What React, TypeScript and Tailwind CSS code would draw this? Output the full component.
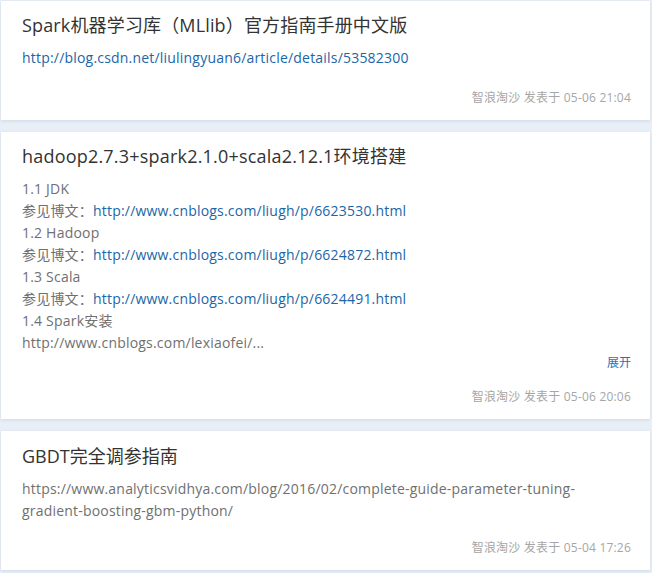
import React from 'react';

const font = { fontFamily: '"Open Sans", "Noto Sans CJK SC", sans-serif' };

const Meta: React.FC<{ date: string; className?: string }> = ({ date, className }) => (
  <div className={`text-right text-[12px] leading-[18px] tracking-[0.2px] text-[#a6a6a6] ${className ?? ''}`}>
    智浪淘沙 发表于 {date}
  </div>
);

const Ref: React.FC<{ url: string }> = ({ url }) => (
  <div>
    参见博文：<a className="text-[#1a66a8]">{url}</a>
  </div>
);

export default function App() {
  return (
    <div className="min-h-[573px] bg-[#e9eff7] pl-[1px] pr-[2px] pt-[1px]" style={font}>
      <div className="flex flex-col gap-[12px]">
        <section className="bg-white pl-[21px] pr-[19px] pt-[11px] pb-[13px] shadow-[0_1px_3px_rgba(160,175,200,0.35)]">
          <h2 className="text-[18px] leading-[26px] tracking-[0.15px] text-[#333]">Spark机器学习库（MLlib）官方指南手册中文版</h2>
          <div className="mt-[9px] text-[14px] leading-[22px] tracking-[0.2px] text-[#1a66a8]">
            http://blog.csdn.net/liulingyuan6/article/details/53582300
          </div>
          <Meta date="05-06 21:04" className="mt-[20px]" />
        </section>

        <section className="bg-white pl-[21px] pr-[19px] pt-[11px] pb-[13px] shadow-[0_1px_3px_rgba(160,175,200,0.35)]">
          <h2 className="text-[18px] leading-[26px] tracking-[0.2px] text-[#333]">hadoop2.7.3+spark2.1.0+scala2.12.1环境搭建</h2>
          <div className="mt-[9px] text-[14px] leading-[22px] tracking-[0.2px] text-[#707070]">
            <div>1.1 JDK</div>
            <Ref url="http://www.cnblogs.com/liugh/p/6623530.html" />
            <div>1.2 Hadoop</div>
            <Ref url="http://www.cnblogs.com/liugh/p/6624872.html" />
            <div>1.3 Scala</div>
            <Ref url="http://www.cnblogs.com/liugh/p/6624491.html" />
            <div>1.4 Spark安装</div>
            <div>http://www.cnblogs.com/lexiaofei/...</div>
          </div>
          <div className="text-right text-[12px] leading-[18px]">
            <span className="text-[#1e73be]">展开</span>
          </div>
          <Meta date="05-06 20:06" className="mt-[16px]" />
        </section>

        <section className="bg-white pl-[21px] pr-[19px] pt-[12px] pb-[13px] shadow-[0_1px_3px_rgba(160,175,200,0.35)]">
          <h2 className="text-[18px] leading-[26px] text-[#333]">GBDT完全调参指南</h2>
          <div className="mt-[9px] pr-[20px] text-[14px] leading-[22px] tracking-[0.2px] text-[#707070]">
            https://www.analyticsvidhya.com/blog/2016/02/complete-guide-parameter-tuning-gradient-boosting-gbm-python/
          </div>
          <Meta date="05-04 17:26" className="mt-[17px]" />
        </section>
      </div>
    </div>
  );
}
